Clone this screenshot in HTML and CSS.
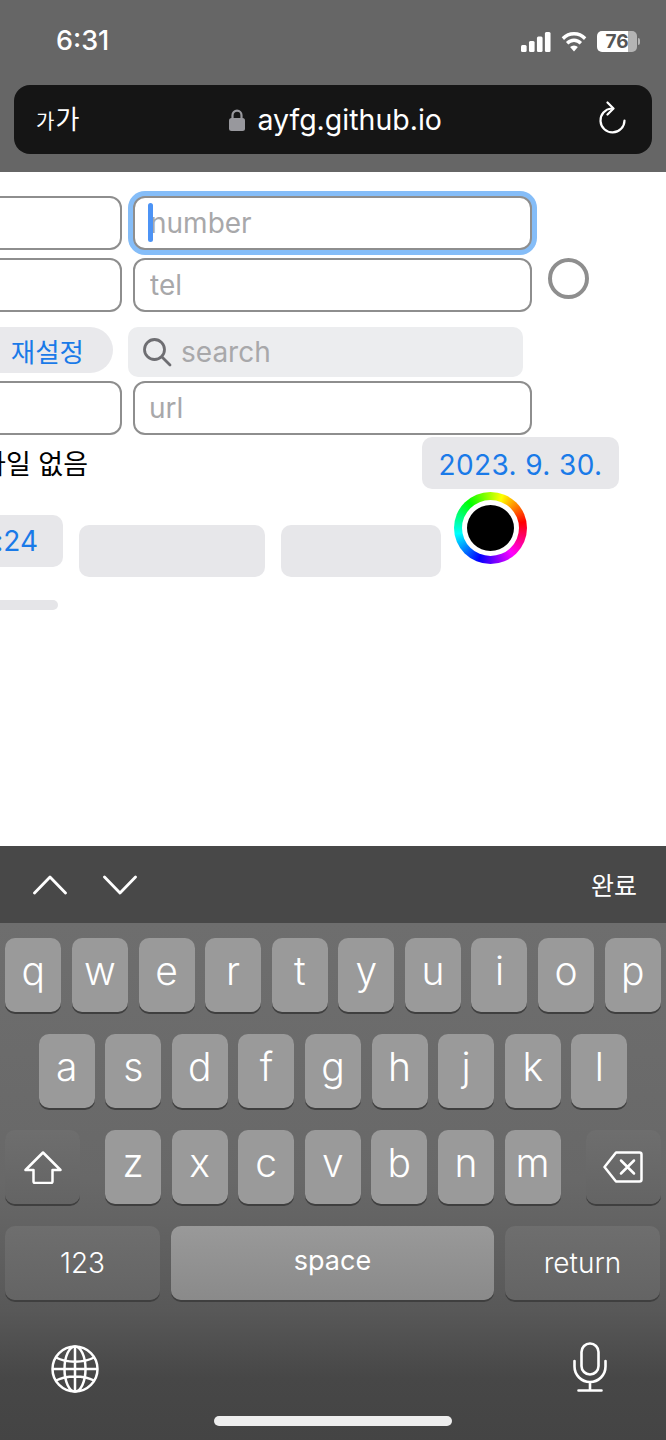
FILE: index.html
```html
<!DOCTYPE html>
<html lang="ko">
<head>
<meta charset="UTF-8" />
<meta name="viewport" content="width=device-width, initial-scale=1" />
<title>ayfg.github.io</title>
<link rel="stylesheet" href="styles.css">
</head>
<body>

<header class="browser-top">
  <div class="status">
    <span class="time">6:31</span>
    <div class="status-icons">
      <svg width="30" height="20" viewBox="0 0 32 20" fill="#fff" preserveAspectRatio="none">
        <rect x="0" y="13" width="6" height="7" rx="1.5"/>
        <rect x="8.5" y="9" width="6" height="11" rx="1.5"/>
        <rect x="17" y="4.5" width="6" height="15.5" rx="1.5"/>
        <rect x="25.5" y="0" width="6" height="20" rx="1.5"/>
      </svg>
      <svg width="26" height="21" viewBox="0 0 28 21" fill="none" stroke="#fff" stroke-width="3.6" preserveAspectRatio="none">
        <path d="M2 7.6a17.2 17.2 0 0 1 24 0"/>
        <path d="M6.6 12.2a10.6 10.6 0 0 1 14.8 0"/>
        <path d="M14 20.5l-4.2-4.4a6 6 0 0 1 8.4 0z" fill="#fff" stroke="none"/>
      </svg>
      <div class="battery"><div class="battery-body">76</div><div class="battery-nub"></div></div>
    </div>
  </div>
  <div class="urlbar">
    <span class="aa"><small>가</small>가</span>
    <div class="address">
      <svg width="18" height="22" viewBox="0 0 18 22">
        <path d="M4.5 10V6.200a4.500 4.500 0 0 1 9 0V10" fill="none" stroke="#98989d" stroke-width="2.200"/>
        <rect x="1" y="9" width="16" height="13" rx="2.500" fill="#98989d"/>
      </svg>
      <span>ayfg.github.io</span>
    </div>
    <svg class="reload" width="30" height="34" viewBox="0 0 30 34" fill="none" stroke="#fff" stroke-width="2.200" stroke-linecap="round" stroke-linejoin="round">
      <path d="M14.500 7.500a12 12 0 1 0 13 12"/>
      <path d="M10.500 1.500l6 6-6 6"/>
    </svg>
  </div>
</header>

<main class="content">
  <div class="row first">
    <input class="field side" type="text">
    <div class="focus-wrap">
      <input class="field focused" type="text" placeholder="number">
      <span class="caret"></span>
    </div>
  </div>
  <div class="row second">
    <input class="field side" type="text">
    <input class="field" type="text" placeholder="tel">
    <span class="radio"></span>
  </div>
  <div class="row third">
    <button class="reset">재설정</button>
    <div class="search">
      <svg width="30" height="30" viewBox="0 0 30 30" fill="none" stroke="#6e6e72" stroke-width="2.800" stroke-linecap="round">
        <circle cx="12.500" cy="12.500" r="10"/>
        <path d="M20 20l8 8"/>
      </svg>
      <span>search</span>
    </div>
  </div>
  <div class="row fourth">
    <input class="field side" type="text">
    <input class="field url" type="text" placeholder="url">
  </div>
  <div class="row file-row">
    <span class="file-text">파일 선택 파일 없음</span>
    <button class="date">2023. 9. 30.</button>
  </div>
  <div class="row pickers">
    <button class="clock">오후 6:24</button>
    <span class="blank blank-a"></span>
    <span class="blank blank-b"></span>
    <span class="color-wheel"><span class="color-dot"></span></span>
  </div>
  <div class="range"></div>
</main>

<div class="kb-toolbar">
  <div class="kb-arrows">
    <svg width="34" height="20" viewBox="0 0 34 20" fill="none" stroke="#fff" stroke-width="2.800" stroke-linecap="round" stroke-linejoin="round"><path d="M1.500 18L17 2l15.500 16"/></svg>
    <svg width="34" height="20" viewBox="0 0 34 20" fill="none" stroke="#fff" stroke-width="2.800" stroke-linecap="round" stroke-linejoin="round"><path d="M1.500 2L17 18 32.500 2"/></svg>
  </div>
  <span class="done">완료</span>
</div>

<section class="keyboard">
  <div class="kb-row">
    <div class="key">q</div><div class="key">w</div><div class="key">e</div><div class="key">r</div><div class="key">t</div><div class="key">y</div><div class="key">u</div><div class="key">i</div><div class="key">o</div><div class="key">p</div>
  </div>
  <div class="kb-row">
    <div class="key">a</div><div class="key">s</div><div class="key">d</div><div class="key">f</div><div class="key">g</div><div class="key">h</div><div class="key">j</div><div class="key">k</div><div class="key">l</div>
  </div>
  <div class="kb-row row-shift">
    <div class="key fn shift">
      <svg width="38" height="33" viewBox="0 0 38 33" fill="none" stroke="#fff" stroke-width="2.500" stroke-linejoin="round"><path d="M19 1.500L1.500 19H9.500v11.500a1.500 1.500 0 0 0 1.500 1.500h16a1.500 1.500 0 0 0 1.500-1.500V19h8z"/></svg>
    </div>
    <div class="key">z</div><div class="key">x</div><div class="key">c</div><div class="key">v</div><div class="key">b</div><div class="key">n</div><div class="key">m</div>
    <div class="key fn backspace">
      <svg width="40" height="32" viewBox="0 0 40 32" fill="none" stroke="#fff" stroke-width="2.500" stroke-linecap="round" stroke-linejoin="round"><path d="M13 1.500h23.500a2 2 0 0 1 2 2v25a2 2 0 0 1-2 2H13L1.500 16z"/><path d="M18 9.500l13 13M31 9.500l-13 13"/></svg>
    </div>
  </div>
  <div class="kb-row row-bottom">
    <div class="key fn wide">123</div>
    <div class="key space">space</div>
    <div class="key fn wide">return</div>
  </div>
  <div class="kb-extra">
    <svg width="48" height="48" viewBox="0 0 48 48" fill="none" stroke="#fff" stroke-width="2.500">
      <circle cx="24" cy="24" r="22.500"/>
      <ellipse cx="24" cy="24" rx="10.500" ry="22.500"/>
      <path d="M24 1.500v45M1.500 24h45M5 12.500c10 5.500 28 5.500 38 0M5 35.500c10-5.500 28-5.500 38 0"/>
    </svg>
    <svg class="mic" width="34" height="50" viewBox="0 0 34 50" fill="none" stroke="#fff" stroke-width="2.600" stroke-linecap="round">
      <rect x="8.500" y="1.500" width="17" height="31" rx="8.500"/>
      <path d="M1.500 19v5.500a15.500 15.500 0 0 0 31 0V19M17 40v8.500M5.500 48.500h23"/>
    </svg>
  </div>
  <div class="home-bar"></div>
</section>

</body>
</html>
```

FILE: styles.css
```css
* {
  box-sizing: border-box;
}
body {
  margin: 0;
  width: 666px;
  height: 1440px;
  overflow: hidden;
  background: #fff;
  font-family: Inter, "Noto Sans CJK KR", sans-serif;
}

/* browser chrome */
.browser-top {
  height: 172px;
  background: #666;
  padding: 0 14px;
  color: #fff;
}
.status {
  height: 85px;
  padding: 27px 12px 0 42px;
  display: flex;
  justify-content: space-between;
  align-items: flex-start;
}
.time {
  font-size: 27px;
  font-weight: 500;
  line-height: 28px;
}
.status-icons {
  display: flex;
  align-items: center;
  gap: 10px;
  padding-top: 4px;
}
.battery {
  display: flex;
  align-items: center;
  gap: 1px;
}
.battery-body {
  width: 40px;
  height: 21px;
  border-radius: 5px;
  background: linear-gradient(90deg, #fff 77%, #b4b4b4 77%);
  color: #555;
  font-size: 19px;
  font-weight: 700;
  line-height: 21px;
  text-align: center;
}
.battery-nub {
  width: 2px;
  height: 7px;
  border-radius: 0 2px 2px 0;
  background: #b4b4b4;
}
.urlbar {
  height: 69px;
  border-radius: 16px;
  background: #151515;
  display: flex;
  align-items: center;
  justify-content: space-between;
  padding: 0 25px 0 22px;
}
.aa {
  font-family: "Noto Sans CJK KR", sans-serif;
  font-size: 26px;
  line-height: 34px;
  letter-spacing: 1px;
}
.aa small {
  font-size: 20px;
}
.address {
  display: flex;
  align-items: center;
  gap: 11px;
  font-size: 28.500px;
  margin-right: 7px;
}
.reload {
  margin-top: -4px;
}

/* page */
.content {
  height: 674px;
  overflow: hidden;
  padding-top: 24px;
  background: #fff;
}
.row {
  display: flex;
  margin-left: -200px;
}
.field {
  width: 399px;
  height: 54px;
  border: 2px solid #8e8e8e;
  border-radius: 12px;
  padding: 0 15px;
  font: 28px Inter, sans-serif;
  background: #fff;
  outline: none;
  flex: none;
}
.field::placeholder {
  color: #a8a8aa;
  opacity: 1;
}
.url {
  padding-left: 14px;
}
.side {
  width: 322px;
  margin-right: 11px;
}
.focus-wrap {
  position: relative;
}
.focused {
  box-shadow: 0 0 0 5px #85bdf8;
}
.caret {
  position: absolute;
  left: 15px;
  top: 7px;
  width: 5px;
  height: 39px;
  border-radius: 3px;
  background: #4c93f5;
}
.second {
  margin-top: 8px;
}
.radio {
  width: 41px;
  height: 41px;
  margin-left: 16px;
  border: 4px solid #8e8e8e;
  border-radius: 50%;
  flex: none;
}
.third {
  margin-top: 15px;
}
.reset {
  width: 313px;
  height: 46px;
  margin-right: 15px;
  padding: 0 29px 0 0;
  border: none;
  border-radius: 23px;
  background: #e9e9ec;
  color: #1a7ae8;
  font: 26.500px "Noto Sans CJK KR", sans-serif;
  text-align: right;
}
.search {
  width: 395px;
  height: 50px;
  padding-left: 14px;
  display: flex;
  align-items: center;
  gap: 9px;
  border-radius: 10px;
  background: #ecedef;
  color: #a8a8aa;
  font-size: 28px;
}
.fourth {
  margin-top: 4px;
}
.file-row {
  width: 819px;
  height: 52px;
  margin-top: 2px;
  justify-content: space-between;
}
.file-text {
  width: 288px;
  margin-top: 8px;
  overflow: hidden;
  text-align: right;
  white-space: nowrap;
  font: 27px/36px "Noto Sans CJK KR", sans-serif;
  color: #000;
}
.date, .clock {
  height: 52px;
  border: none;
  border-radius: 10px;
  background: #e7e7ea;
  color: #1a7ae8;
  font: 28px Inter, "Noto Sans CJK KR", sans-serif;
}
.date {
  width: 197px;
  padding: 3px 0 0;
  letter-spacing: 0.400px;
}
.pickers {
  margin-top: 3px;
  align-items: flex-start;
}
.clock {
  width: 263px;
  margin-top: 23px;
  padding: 0 25px 4px 0;
  text-align: right;
}
.blank {
  height: 52px;
  margin: 33px 0 0 16px;
  border-radius: 10px;
  background: #e7e7ea;
  flex: none;
}
.blank-a {
  width: 186px;
}
.blank-b {
  width: 160px;
}
.color-wheel {
  width: 73px;
  height: 72px;
  margin-left: 13px;
  display: flex;
  align-items: center;
  justify-content: center;
  border-radius: 50%;
  background: conic-gradient(from 20deg, #ff0, #f00 60deg, #f0f 120deg, #00f 180deg, #0ff 240deg, #0f0 300deg, #ff0);
  flex: none;
}
.color-dot {
  width: 57px;
  height: 56px;
  border: 5px solid #fff;
  border-radius: 50%;
  background: #000;
}
.range {
  width: 58px;
  height: 10px;
  margin-top: 23px;
  border-radius: 0 5px 5px 0;
  background: #e5e5e8;
}

/* keyboard */
.kb-toolbar {
  height: 77px;
  padding: 0 29px 0 33px;
  display: flex;
  align-items: center;
  justify-content: space-between;
  background: #484848;
  color: #fff;
}
.kb-arrows {
  display: flex;
  gap: 36px;
}
.done {
  font: 400 25px "Noto Sans CJK KR", sans-serif;
  margin-top: -2px;
}
.keyboard {
  height: 517px;
  padding-top: 15px;
  background: linear-gradient(#6e6e6e, #686868 50%, #585858 75%, #474747 88%, #444);
  color: #fff;
}
.kb-row {
  display: flex;
  justify-content: center;
  gap: 10.600px;
  margin-bottom: 22px;
}
.key {
  width: 56px;
  height: 74px;
  padding-bottom: 9px;
  display: flex;
  align-items: center;
  justify-content: center;
  border-radius: 10px;
  background: #9a9a9a;
  box-shadow: 0 2px 0 #3f3f3f;
  font-size: 39px;
  font-weight: 300;
  flex: none;
}
.fn {
  background: linear-gradient(#6e6e6e, #646464);
}
.row-shift {
  justify-content: flex-start;
  padding-left: 5px;
}
.shift {
  width: 75px;
  margin-right: 14.400px;
  padding: 0;
}
.backspace {
  width: 75px;
  margin-left: 14.400px;
  padding: 0;
}
.row-bottom {
  justify-content: flex-start;
  padding-left: 5px;
  gap: 11px;
}
.wide {
  width: 155px;
  font-size: 28px;
  padding: 0;
}
.space {
  width: 323px;
  padding-bottom: 5px;
  font-size: 27px;
  font-weight: 400;
  background: linear-gradient(#999, #8a8a8a);
}
.kb-extra {
  height: 71px;
  display: flex;
  justify-content: space-between;
  align-items: flex-start;
  padding: 23px 59px 0 51px;
}
.mic {
  margin-top: -3px;
}
.home-bar {
  width: 238px;
  height: 10px;
  margin: 23px 0 0 214px;
  border-radius: 5px;
  background: #eee;
}
```
